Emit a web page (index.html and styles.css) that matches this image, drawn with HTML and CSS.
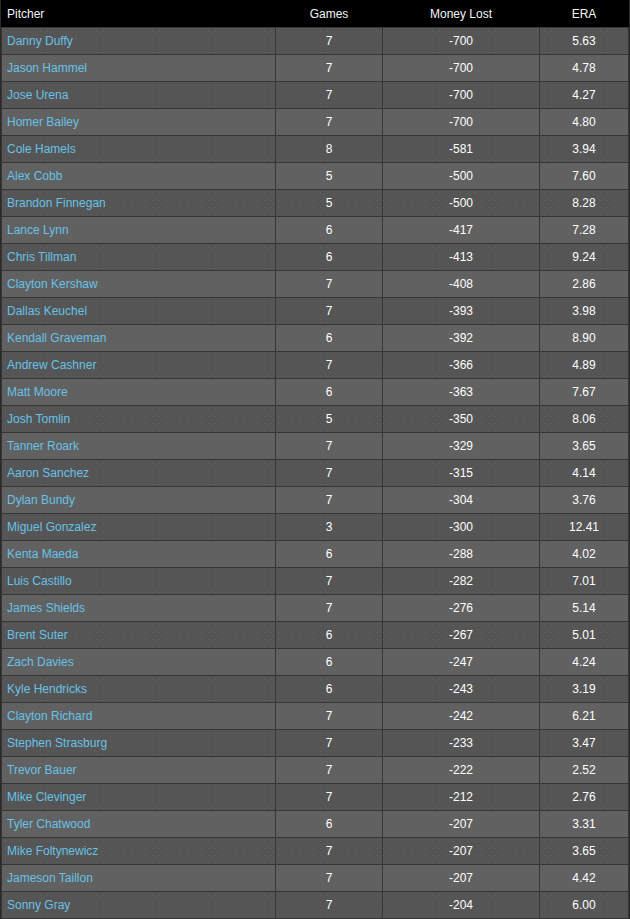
FILE: index.html
```html
<!DOCTYPE html>
<html lang="en">
<head>
    <meta charset="UTF-8">
    <meta name="viewport" content="width=device-width, initial-scale=1.0">
    <title>Pitchers - Money Lost</title>
    <link rel="stylesheet" href="styles.css">
</head>
<body>

<table class="stats">
    <colgroup>
        <col class="col-name">
        <col class="col-games">
        <col class="col-money">
        <col class="col-era">
    </colgroup>
    <thead>
        <tr>
            <th class="name">Pitcher</th>
            <th>Games</th>
            <th>Money Lost</th>
            <th>ERA</th>
        </tr>
    </thead>
    <tbody>
        <tr><td class="name"><a href="#">Danny Duffy</a></td><td>7</td><td>-700</td><td>5.63</td></tr>
        <tr><td class="name"><a href="#">Jason Hammel</a></td><td>7</td><td>-700</td><td>4.78</td></tr>
        <tr><td class="name"><a href="#">Jose Urena</a></td><td>7</td><td>-700</td><td>4.27</td></tr>
        <tr><td class="name"><a href="#">Homer Bailey</a></td><td>7</td><td>-700</td><td>4.80</td></tr>
        <tr><td class="name"><a href="#">Cole Hamels</a></td><td>8</td><td>-581</td><td>3.94</td></tr>
        <tr><td class="name"><a href="#">Alex Cobb</a></td><td>5</td><td>-500</td><td>7.60</td></tr>
        <tr><td class="name"><a href="#">Brandon Finnegan</a></td><td>5</td><td>-500</td><td>8.28</td></tr>
        <tr><td class="name"><a href="#">Lance Lynn</a></td><td>6</td><td>-417</td><td>7.28</td></tr>
        <tr><td class="name"><a href="#">Chris Tillman</a></td><td>6</td><td>-413</td><td>9.24</td></tr>
        <tr><td class="name"><a href="#">Clayton Kershaw</a></td><td>7</td><td>-408</td><td>2.86</td></tr>
        <tr><td class="name"><a href="#">Dallas Keuchel</a></td><td>7</td><td>-393</td><td>3.98</td></tr>
        <tr><td class="name"><a href="#">Kendall Graveman</a></td><td>6</td><td>-392</td><td>8.90</td></tr>
        <tr><td class="name"><a href="#">Andrew Cashner</a></td><td>7</td><td>-366</td><td>4.89</td></tr>
        <tr><td class="name"><a href="#">Matt Moore</a></td><td>6</td><td>-363</td><td>7.67</td></tr>
        <tr><td class="name"><a href="#">Josh Tomlin</a></td><td>5</td><td>-350</td><td>8.06</td></tr>
        <tr><td class="name"><a href="#">Tanner Roark</a></td><td>7</td><td>-329</td><td>3.65</td></tr>
        <tr><td class="name"><a href="#">Aaron Sanchez</a></td><td>7</td><td>-315</td><td>4.14</td></tr>
        <tr><td class="name"><a href="#">Dylan Bundy</a></td><td>7</td><td>-304</td><td>3.76</td></tr>
        <tr><td class="name"><a href="#">Miguel Gonzalez</a></td><td>3</td><td>-300</td><td>12.41</td></tr>
        <tr><td class="name"><a href="#">Kenta Maeda</a></td><td>6</td><td>-288</td><td>4.02</td></tr>
        <tr><td class="name"><a href="#">Luis Castillo</a></td><td>7</td><td>-282</td><td>7.01</td></tr>
        <tr><td class="name"><a href="#">James Shields</a></td><td>7</td><td>-276</td><td>5.14</td></tr>
        <tr><td class="name"><a href="#">Brent Suter</a></td><td>6</td><td>-267</td><td>5.01</td></tr>
        <tr><td class="name"><a href="#">Zach Davies</a></td><td>6</td><td>-247</td><td>4.24</td></tr>
        <tr><td class="name"><a href="#">Kyle Hendricks</a></td><td>6</td><td>-243</td><td>3.19</td></tr>
        <tr><td class="name"><a href="#">Clayton Richard</a></td><td>7</td><td>-242</td><td>6.21</td></tr>
        <tr><td class="name"><a href="#">Stephen Strasburg</a></td><td>7</td><td>-233</td><td>3.47</td></tr>
        <tr><td class="name"><a href="#">Trevor Bauer</a></td><td>7</td><td>-222</td><td>2.52</td></tr>
        <tr><td class="name"><a href="#">Mike Clevinger</a></td><td>7</td><td>-212</td><td>2.76</td></tr>
        <tr><td class="name"><a href="#">Tyler Chatwood</a></td><td>6</td><td>-207</td><td>3.31</td></tr>
        <tr><td class="name"><a href="#">Mike Foltynewicz</a></td><td>7</td><td>-207</td><td>3.65</td></tr>
        <tr><td class="name"><a href="#">Jameson Taillon</a></td><td>7</td><td>-207</td><td>4.42</td></tr>
        <tr><td class="name"><a href="#">Sonny Gray</a></td><td>7</td><td>-204</td><td>6.00</td></tr>
    </tbody>
</table>

</body>
</html>
```

FILE: styles.css
```css
body {
    margin: 0;
    background-color: #2a2a2a;
    font-family: "Liberation Sans", Arial, sans-serif;
    font-size: 12px;
    color: #fff;
}
.stats {
    border-collapse: collapse;
    table-layout: fixed;
    width: 627px;
    margin-left: 1px;
}
.col-name { width: 274px; }
.col-games { width: 107px; }
.col-money { width: 157px; }
.col-era { width: 89px; }

.stats th,
.stats td {
    height: 26px;
    padding: 0 4px;
    text-align: center;
    border: 1px solid #363636;
    white-space: nowrap;
}
.stats th {
    background-color: #000;
    border-color: #000;
    border-bottom-color: #363636;
    font-weight: normal;
    color: #f4f4f4;
}
.stats th.name,
.stats td.name {
    text-align: left;
    padding-left: 5px;
}
.stats tbody tr {
    background-color: #616161;
}
/* dotted texture on every other row */
.stats tbody tr:nth-child(odd) {
    background-color: #555;
    background-image: radial-gradient(circle, rgba(255, 255, 255, 0.07) 0.6px, transparent 1px);
    background-size: 7px 7px;
}
.stats a {
    color: #68c2e6;
    text-decoration: none;
}
```
